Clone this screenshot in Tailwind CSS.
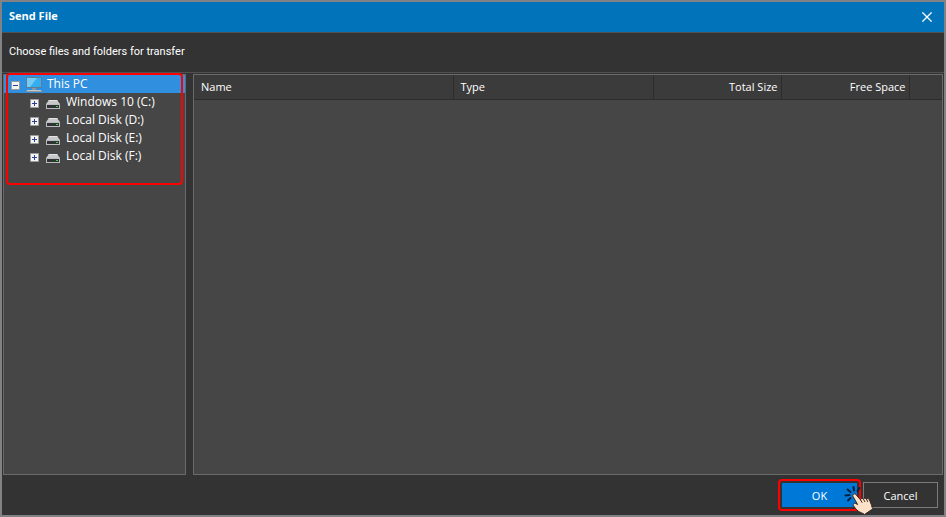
<!DOCTYPE html>
<html lang="en">
<head>
    <meta charset="UTF-8">
    <meta name="viewport" content="width=device-width, initial-scale=1.0">
    <title>Send File</title>
    <script src="https://cdn.jsdelivr.net/npm/@tailwindcss/browser@4"></script>
</head>
<body class="font-['Open_Sans','Noto_Sans',sans-serif] text-[12px] leading-[18px] text-white bg-[#333333]">
    <!-- Icons used more than once -->
    <svg class="hidden">
        <symbol id="drive" viewBox="0 0 14 10">
            <path d="M3 1h8l3 4H0z" fill="#c6c8ca"/>
            <path d="M3 1h8l.8 1H2.200z" fill="#e4e4e4"/>
            <path d="M0 5h14v5H0z" fill="#b9bbbd"/>
            <path d="M1 6h12v3H1z" fill="#303234"/>
            <path d="M10 7h2v1h-2z" fill="#2be03c"/>
        </symbol>
        <symbol id="plus" viewBox="0 0 9 9">
            <path d="M.5.5h8v8h-8z" fill="#f4f4f4" stroke="#9c9c9c"/>
            <path d="M2 4.5h5M4.5 2v5" stroke="#2b3f94"/>
        </symbol>
    </svg>

    <div class="flex flex-col min-h-screen border-2 border-[#818186]">
        <!-- Title bar -->
        <header class="flex items-center justify-between h-[31px] pl-[7px] pr-3 bg-[#0173ba] border-b border-[#505050]">
            <h1 class="font-bold text-[11px] pb-[2px]">Send File</h1>
            <button type="button" aria-label="Close">
                <svg class="w-[10px] h-[10px]" viewBox="0 0 10 10"><path d="M.4.4l9.2 9.2M9.6.4L.4 9.6" stroke="#fff" stroke-width="1.3"/></svg>
            </button>
        </header>

        <p class="flex items-center h-10 pl-[7px] pb-[2px] font-[Roboto,sans-serif] text-[11px] border-b border-[#505050]">Choose files and folders for transfer</p>

        <main class="flex flex-1 gap-[7px] mt-px mx-px">
            <!-- Folder tree -->
            <nav class="relative w-[183px] shrink-0 bg-[#464646] border border-[#6a6a6a]">
                <ul>
                    <li>
                        <div class="flex items-center h-[18px] pl-[7px] bg-[#308fdf]">
                            <button type="button" aria-label="Collapse" class="mt-[3px]">
                                <svg class="w-[9px] h-[9px]" viewBox="0 0 9 9"><path d="M.5.5h8v8h-8z" fill="#f4f4f4" stroke="#9c9c9c"/><path d="M2 4.5h5" stroke="#2b3f94"/></svg>
                            </button>
                            <svg class="w-4 h-[15px] ml-[6px]" viewBox="0 0 16 15">
                                <path d="M0 0h16v11H0z" fill="#5d7f95"/>
                                <path d="M1 1h14v9H1z" fill="#35aef0"/>
                                <path d="M1 1h10L4 10H1z" fill="#74cbf5"/>
                                <path d="M6 11h4v2H6z" fill="#8d999f"/>
                                <path d="M1 13h14v1H1z" fill="#c3cace"/>
                                <path d="M0 14h16v1H0z" fill="#8d979c"/>
                            </svg>
                            <span class="ml-[5px]">This PC</span>
                        </div>
                        <ul>
                            <li class="flex items-center h-[18px] pl-[26px]">
                                <button type="button" aria-label="Expand" class="mt-[3px]"><svg class="w-[9px] h-[9px]"><use href="#plus"/></svg></button>
                                <svg class="w-[14px] h-[10px] ml-[7px] mt-1"><use href="#drive"/></svg>
                                <span class="ml-[6px]">Windows 10 (C:)</span>
                            </li>
                            <li class="flex items-center h-[18px] pl-[26px]">
                                <button type="button" aria-label="Expand" class="mt-[3px]"><svg class="w-[9px] h-[9px]"><use href="#plus"/></svg></button>
                                <svg class="w-[14px] h-[10px] ml-[7px] mt-1"><use href="#drive"/></svg>
                                <span class="ml-[6px]">Local Disk (D:)</span>
                            </li>
                            <li class="flex items-center h-[18px] pl-[26px]">
                                <button type="button" aria-label="Expand" class="mt-[3px]"><svg class="w-[9px] h-[9px]"><use href="#plus"/></svg></button>
                                <svg class="w-[14px] h-[10px] ml-[7px] mt-1"><use href="#drive"/></svg>
                                <span class="ml-[6px]">Local Disk (E:)</span>
                            </li>
                            <li class="flex items-center h-[18px] pl-[26px]">
                                <button type="button" aria-label="Expand" class="mt-[3px]"><svg class="w-[9px] h-[9px]"><use href="#plus"/></svg></button>
                                <svg class="w-[14px] h-[10px] ml-[7px] mt-1"><use href="#drive"/></svg>
                                <span class="ml-[6px]">Local Disk (F:)</span>
                            </li>
                        </ul>
                    </li>
                </ul>
                <!-- Highlight around the drives -->
                <div class="absolute -top-[2px] left-[2px] right-[2px] h-[112px] border-2 border-[#ff0000] rounded pointer-events-none"></div>
            </nav>

            <!-- File list -->
            <section class="flex-1 bg-[#464646] border border-[#6a6a6a]">
                <table class="w-full table-fixed text-[11px]">
                    <thead>
                        <tr class="h-6 bg-[#3b3b3b] border-b border-[#2c2c2c]">
                            <th class="w-[259px] pl-[7px] text-left font-normal border-r border-[#2c2c2c]">Name</th>
                            <th class="w-[200px] pl-[7px] text-left font-normal border-r border-[#2c2c2c]">Type</th>
                            <th class="w-[128px] pr-[3px] text-right font-normal border-r border-[#2c2c2c]">Total Size</th>
                            <th class="w-[128px] pr-[3px] text-right font-normal border-r border-[#2c2c2c]">Free Space</th>
                            <td></td>
                        </tr>
                    </thead>
                </table>
            </section>
        </main>

        <!-- Buttons -->
        <footer class="flex items-center justify-end gap-[2px] h-10 pr-[6px]">
            <div class="relative p-[2px] border-2 border-[#ff0000] rounded">
                <button type="button" class="block w-[75px] h-6 pt-[2px] text-[11px] bg-[#0078d7]">OK</button>
                <svg class="absolute left-[64px] top-[4px] w-[30px] h-[30px]" viewBox="0 0 30 30">
                    <path d="M9.500 2l.5 3.500M3.500 4.500l3 2.500M1.500 10.500l4-.5M4 15.500l2.500-2.500M15.500 3L13.500 6" stroke="#06203a" stroke-width="2" stroke-linecap="round"/>
                    <path d="M9 11.500c-.9-1.900 1.400-3.600 2.900-2l4.600 5.300c.2-1.500 2-1.900 2.900-.7.5-1.300 2.400-1.300 3 0 .9-1 2.700-.6 3.100.9l1.800 4.500c.4 1.700.5 2.800 1.700 4.200L20.500 29.500c-1.800-1.600-4-1.700-6.200-3.300-2.100-1.500-3.500-3.700-4.800-5.400-1-1.700.6-3.100 2.300-2.300l1.800 1z" fill="#fde0c8" stroke="#35231c"/>
                    <path d="M16.500 14.800l1.700 2.900M19.400 14.100l1.600 2.900M22.400 14.100l1.400 2.800" stroke="#35231c" fill="none"/>
                </svg>
            </div>
            <button type="button" class="w-[75px] h-[26px] pt-[2px] text-[11px] border border-[#7b7b7b]">Cancel</button>
        </footer>
    </div>
</body>
</html>
